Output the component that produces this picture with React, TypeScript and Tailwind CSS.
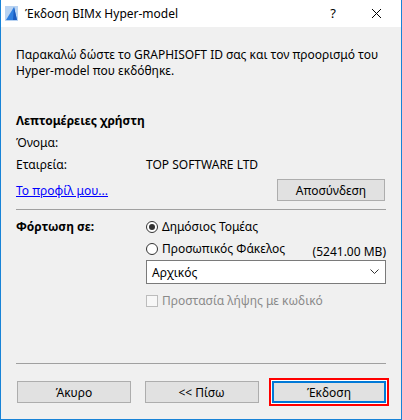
import { useState } from 'react';

const font = { fontFamily: '"Noto Sans", "Open Sans", sans-serif' };

function Radio({ checked, label }: { checked?: boolean; label: string }) {
  return (
    <div className="flex items-center gap-[4px]">
      <span className="flex h-[12px] w-[12px] items-center justify-center rounded-full border border-[#333] bg-white">
        {checked && <span className="h-[6px] w-[6px] rounded-full bg-[#333]" />}
      </span>
      <span>{label}</span>
    </div>
  );
}

function WinButton({ label, focused }: { label: string; focused?: boolean }) {
  return (
    <button
      className={
        focused
          ? 'h-[22px] w-[114px] border-2 border-[#0078d7] bg-[#e1e1e1] text-black shadow-[0_0_0_1px_#fff,0_0_0_3px_#f00]'
          : 'h-[22px] w-[114px] border border-[#adadad] bg-[#e1e1e1] text-black'
      }
    >
      {label}
    </button>
  );
}

export default function App() {
  const [folder] = useState('Αρχικός');

  return (
    <div
      className="flex h-[420px] w-[402px] flex-col border-x border-b border-[#1883d7] bg-[#f0f0f0] text-[12px] leading-[15px] text-black"
      style={font}
    >
      {/* title bar */}
      <div className="flex h-[27px] shrink-0 items-center bg-white pl-[4px]">
        <svg width="13" height="15" viewBox="0 0 13 15">
          <rect x="0" y="0" width="13" height="15" fill="#b9d3f2" />
          <path d="M9 1 L12 14 L1 14 Z" fill="#2f7fe0" />
          <path d="M9 1 L12 14 L8 14 Z" fill="#1a5bbf" />
        </svg>
        <span className="ml-[7px] text-[12px]">Έκδοση BIMx Hyper-model</span>
        <span className="ml-auto mr-[36px] text-[13px]">?</span>
        <svg className="mr-[20px]" width="9" height="9" viewBox="0 0 9 9">
          <path d="M0 0 L9 9 M9 0 L0 9" stroke="#000" strokeWidth="1" />
        </svg>
      </div>

      <div className="flex flex-1 flex-col pl-[15px] pr-[15px]">
        {/* intro */}
        <div className="mt-[20px] leading-[16px]">
          <div>Παρακαλώ δώστε το GRAPHISOFT ID σας και τον προορισμό του</div>
          <div>Hyper-model που εκδόθηκε.</div>
        </div>

        <div className="mt-[34px] font-bold">Λεπτομέρειες χρήστη</div>
        <div className="mt-[7px]">Όνομα:</div>
        <div className="mt-[7px] grid grid-cols-[130px_1fr]">
          <span>Εταιρεία:</span>
          <span>TOP SOFTWARE LTD</span>
        </div>

        <div className="mt-[7px] flex items-center justify-between">
          <a href="#" className="text-[#0000ff] underline">
            Το προφίλ μου...
          </a>
          <button className="mr-[1px] h-[22px] w-[108px] border border-[#adadad] bg-[#e1e1e1]">
            Αποσύνδεση
          </button>
        </div>

        <div className="mt-[8px] h-px bg-[#a0a0a0]" />

        {/* destination */}
        <div className="mt-[9px] grid grid-cols-[130px_1fr]">
          <span className="font-bold">Φόρτωση σε:</span>
          <div className="flex flex-col">
            <Radio checked label="Δημόσιος Τομέας" />
            <div className="mt-[7px] flex items-start justify-between">
              <Radio label="Προσωπικός Φάκελος" />
              <span className="mt-[3px]">(5241.00 MB)</span>
            </div>
            <div className="mt-[1px] flex h-[24px] items-center justify-between border border-[#7a7a7a] bg-white pl-[5px] pr-[6px]">
              <span>{folder}</span>
              <svg width="9" height="6" viewBox="0 0 9 6">
                <path d="M0.5 0.5 L4.5 4.5 L8.5 0.5" fill="none" stroke="#333" strokeWidth="1" />
              </svg>
            </div>
            <div className="mt-[9px] flex items-center gap-[4px] text-[#8a8a8a]">
              <span className="h-[12px] w-[12px] border border-[#bcbcbc] bg-[#f7f7f7]" />
              <span>Προστασία λήψης με κωδικό</span>
            </div>
          </div>
        </div>

        <div className="mt-auto h-px bg-[#a0a0a0]" />

        <div className="mb-[16px] mt-[17px] flex justify-between pl-[1px]">
          <WinButton label="Άκυρο" />
          <WinButton label="<< Πίσω" />
          <WinButton label="Έκδοση" focused />
        </div>
      </div>
    </div>
  );
}
